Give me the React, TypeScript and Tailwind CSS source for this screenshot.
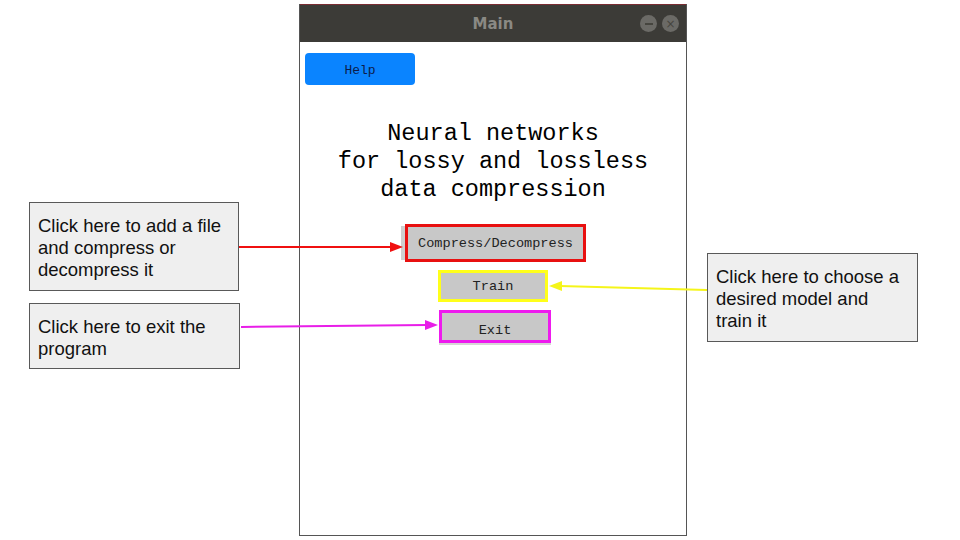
const mono = { fontFamily: '"Liberation Mono", "DejaVu Sans Mono", monospace' };

function Callout({ className, lines }: { className: string; lines: string[] }) {
  return (
    <div
      className={`absolute bg-[#efefef] border border-[#595959] px-[8px] pt-[12px] text-[18.5px] leading-[22px] text-[#111] font-['Liberation_Sans',Arial,sans-serif] ${className}`}
    >
      {lines.map((l) => (
        <div key={l}>{l}</div>
      ))}
    </div>
  );
}

export default function App() {
  return (
    <div className="relative w-[960px] h-[540px] bg-white overflow-hidden">
      {/* application window */}
      <div className="absolute left-[299px] top-[4px] w-[388px] h-[532px] flex flex-col border-x border-b border-[#555] bg-white">
        <div className="h-[1px] bg-[#7a2d33]" />
        <div className="h-[37px] bg-[#3c3b37] relative flex items-center justify-center">
          <span className="mt-[2px] text-[15px] font-bold text-[#8a8984] font-['DejaVu_Sans',sans-serif]">Main</span>
          <div className="absolute right-[7px] top-[10px] flex gap-[5px]">
            <div className="w-[17px] h-[17px] rounded-full bg-[#6b6a66] flex items-center justify-center">
              <div className="w-[8px] h-[2px] bg-[#46453f]" />
            </div>
            <div className="w-[17px] h-[17px] rounded-full bg-[#6b6a66] flex items-center justify-center text-[#46453f] text-[12px] leading-none font-['DejaVu_Sans',sans-serif]">
              ×
            </div>
          </div>
        </div>
        <div className="flex-1 flex flex-col px-[5px] pt-[11px]">
          <button
            style={mono}
            className="w-[110px] h-[32px] pt-[3px] rounded-[4px] bg-[#0a84ff] text-[13px] text-[#0c1c4a]"
          >
            Help
          </button>
          <div
            style={mono}
            className="mt-[35px] text-center text-[23.5px] leading-[28px] text-black"
          >
            <div>Neural networks</div>
            <div>for lossy and lossless</div>
            <div>data compression</div>
          </div>
          <div className="flex flex-col items-center mt-[20px]">
            <div className="flex items-center ml-[1px]">
              <div className="w-[4px] h-[34px] bg-[#cfcfcf]" />
              <button
                style={mono}
                className="w-[181px] h-[38px] pt-[3px] border-[3px] border-[#e81010] bg-[#c8c8c8] text-[13.6px] text-[#222]"
              >
                Compress/Decompress
              </button>
            </div>
            <button
              style={mono}
              className="mt-[8px] w-[110px] h-[32px] pt-[3px] border-[3px] border-[#ffff1a] bg-[#c8c8c8] text-[13.6px] text-[#222]"
            >
              Train
            </button>
            <button
              style={mono}
              className="mt-[8px] ml-[4px] w-[112px] h-[33px] pt-[8px] border-[3px] border-[#ee1aee] bg-[#c8c8c8] text-[13.6px] text-[#222] shadow-[0_2px_0_#d6d6d6]"
            >
              Exit
            </button>
          </div>
        </div>
      </div>

      <Callout className="left-[29px] top-[202px] w-[210px] h-[89px]" lines={['Click here to add a file', 'and compress or', 'decompress it']} />
      <Callout className="left-[29px] top-[303px] w-[211px] h-[66px]" lines={['Click here to exit the', 'program']} />
      <Callout className="left-[707px] top-[253px] w-[211px] h-[89px]" lines={['Click here to choose a', 'desired model and', 'train it']} />

      {/* arrows */}
      <svg className="absolute inset-0 pointer-events-none" width="960" height="540">
        <line x1="239" y1="247" x2="392" y2="247" stroke="#f01010" strokeWidth="2" />
        <polygon points="390,242 403,247 390,252" fill="#f01010" />
        <line x1="241" y1="327" x2="427" y2="325" stroke="#e81ee8" strokeWidth="2" />
        <polygon points="425,320 438,325 425,330" fill="#e81ee8" />
        <line x1="707" y1="290" x2="560" y2="286" stroke="#f5f51a" strokeWidth="2" />
        <polygon points="562,281 549,286 562,291" fill="#f5f51a" />
      </svg>
    </div>
  );
}
